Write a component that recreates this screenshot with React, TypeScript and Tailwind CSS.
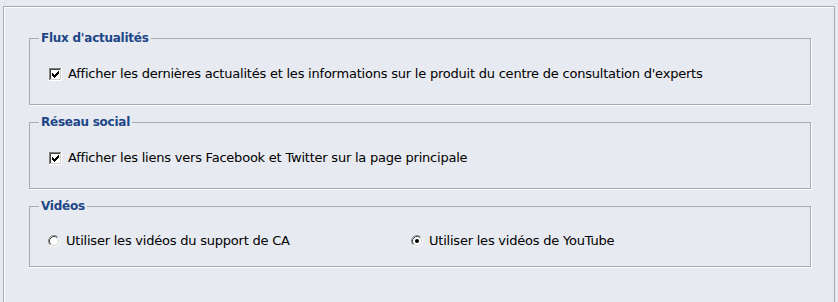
import React from "react";

const font = { fontFamily: '"DejaVu Sans", Verdana, sans-serif' };

function Checkbox() {
  const pix = [
    "......#",
    ".....##",
    "#...###",
    "##.###.",
    "#####..",
    ".###...",
    "..#....",
  ];
  const rects: React.ReactNode[] = [];
  pix.forEach((row, y) =>
    row.split("").forEach((c, x) => {
      if (c === "#") rects.push(<rect key={`${x}-${y}`} x={x + 3} y={y + 3} width={1} height={1} fill="#000" />);
    })
  );
  return (
    <svg width="13" height="13" viewBox="0 0 13 13" shapeRendering="crispEdges" className="shrink-0">
      <rect x="0" y="0" width="13" height="13" fill="#ffffff" />
      <rect x="0" y="0" width="12" height="1" fill="#808080" />
      <rect x="0" y="0" width="1" height="12" fill="#808080" />
      <rect x="1" y="1" width="10" height="1" fill="#404040" />
      <rect x="1" y="1" width="1" height="10" fill="#404040" />
      <rect x="1" y="11" width="11" height="1" fill="#d4d0c8" />
      <rect x="11" y="1" width="1" height="11" fill="#d4d0c8" />
      <rect x="0" y="12" width="13" height="1" fill="#ffffff" />
      <rect x="12" y="0" width="1" height="13" fill="#ffffff" />
      {rects}
    </svg>
  );
}

function Radio({ checked }: { checked?: boolean }) {
  return (
    <svg width="12" height="12" viewBox="0 0 12 12" className="shrink-0">
      <circle cx="6" cy="6" r="5" fill="#ffffff" />
      <path d="M2.11 9.89 A5.5 5.5 0 0 1 9.89 2.11" fill="none" stroke="#8a8a8a" strokeWidth="1" />
      <path d="M2.82 9.18 A4.5 4.5 0 0 1 9.18 2.82" fill="none" stroke="#404040" strokeWidth="1" />
      <path d="M9.89 2.11 A5.5 5.5 0 0 1 2.11 9.89" fill="none" stroke="#ffffff" strokeWidth="1" />
      <path d="M9.18 2.82 A4.5 4.5 0 0 1 2.82 9.18" fill="none" stroke="#d4d0c8" strokeWidth="1" />
      {checked && <circle cx="6" cy="6" r="2" fill="#000" />}
    </svg>
  );
}

function Group({ title, children, h }: { title: string; children: React.ReactNode; h: string }) {
  return (
    <fieldset className={`border border-[#a6abb4] shadow-[1px_1px_0_#ffffff] ${h}`}>
      <legend className="ml-[9px] px-[2px] text-[12px] leading-[16px] tracking-[-0.25px] font-bold text-[#1c4687]" style={font}>
        {title}
      </legend>
      {children}
    </fieldset>
  );
}

export default function App() {
  return (
    <div className="w-[838px] h-[302px] bg-[#e7eaf0] pt-[6px] pl-[3px] overflow-hidden" style={font}>
      <div className="w-[832px] h-[310px] border-l border-t border-r border-[#a6abb4] shadow-[inset_1px_1px_0_#ffffff] pl-[25px] pr-[23px] pt-[23px] flex flex-col gap-[9px]">
        <Group title="Flux d'actualités" h="h-[75px]">
          <div className="flex items-center gap-[6px] pl-[19px] pt-[20px] h-[36px] text-[13px] leading-[16px] tracking-[-0.22px] text-black">
            <Checkbox />
            <span>Afficher les dernières actualités et les informations sur le produit du centre de consultation d'experts</span>
          </div>
        </Group>
        <Group title="Réseau social" h="h-[75px]">
          <div className="flex items-center gap-[6px] pl-[19px] pt-[20px] h-[36px] text-[13px] leading-[16px] tracking-[-0.22px] text-black">
            <Checkbox />
            <span>Afficher les liens vers Facebook et Twitter sur la page principale</span>
          </div>
        </Group>
        <Group title="Vidéos" h="h-[69px]">
          <div className="flex items-center pl-[18px] pt-[19px] h-[35px] text-[13px] leading-[16px] tracking-[-0.22px] text-black">
            <div className="flex items-center gap-[6px] w-[363px]">
              <Radio />
              <span>Utiliser les vidéos du support de CA</span>
            </div>
            <div className="flex items-center gap-[6px]">
              <Radio checked />
              <span>Utiliser les vidéos de YouTube</span>
            </div>
          </div>
        </Group>
      </div>
    </div>
  );
}
